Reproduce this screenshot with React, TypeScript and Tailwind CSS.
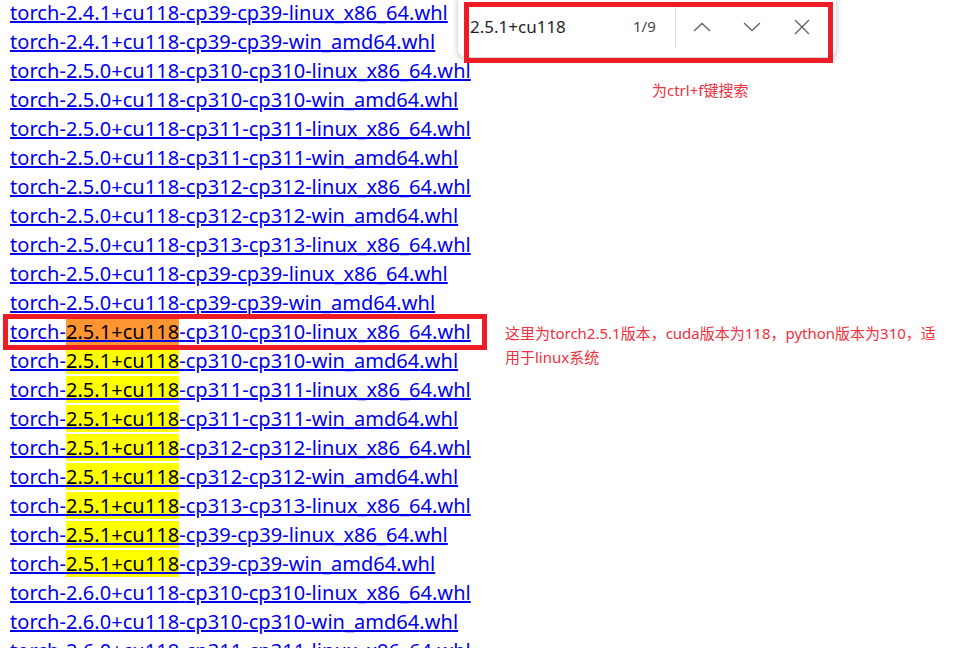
import React from "react";

type Row = { ver: string; tag: string };

const rows: Row[] = [
  { ver: "2.4.1", tag: "cp39-cp39-linux_x86_64" },
  { ver: "2.4.1", tag: "cp39-cp39-win_amd64" },
  { ver: "2.5.0", tag: "cp310-cp310-linux_x86_64" },
  { ver: "2.5.0", tag: "cp310-cp310-win_amd64" },
  { ver: "2.5.0", tag: "cp311-cp311-linux_x86_64" },
  { ver: "2.5.0", tag: "cp311-cp311-win_amd64" },
  { ver: "2.5.0", tag: "cp312-cp312-linux_x86_64" },
  { ver: "2.5.0", tag: "cp312-cp312-win_amd64" },
  { ver: "2.5.0", tag: "cp313-cp313-linux_x86_64" },
  { ver: "2.5.0", tag: "cp39-cp39-linux_x86_64" },
  { ver: "2.5.0", tag: "cp39-cp39-win_amd64" },
  { ver: "2.5.1", tag: "cp310-cp310-linux_x86_64" },
  { ver: "2.5.1", tag: "cp310-cp310-win_amd64" },
  { ver: "2.5.1", tag: "cp311-cp311-linux_x86_64" },
  { ver: "2.5.1", tag: "cp311-cp311-win_amd64" },
  { ver: "2.5.1", tag: "cp312-cp312-linux_x86_64" },
  { ver: "2.5.1", tag: "cp312-cp312-win_amd64" },
  { ver: "2.5.1", tag: "cp313-cp313-linux_x86_64" },
  { ver: "2.5.1", tag: "cp39-cp39-linux_x86_64" },
  { ver: "2.5.1", tag: "cp39-cp39-win_amd64" },
  { ver: "2.6.0", tag: "cp310-cp310-linux_x86_64" },
  { ver: "2.6.0", tag: "cp310-cp310-win_amd64" },
  { ver: "2.6.0", tag: "cp311-cp311-linux_x86_64" },
];

const font = { fontFamily: '"Noto Sans", "Noto Sans CJK SC", sans-serif' };

function Link({ row, active }: { row: Row; active: boolean }) {
  const match = row.ver === "2.5.1";
  return (
    <div className="h-[29px] leading-[29px] whitespace-nowrap">
      <a href="#" className="text-[#0000ee] underline">
        torch-
        {match ? (
          <span className={active ? "bg-[#ff9632] text-black" : "bg-[#ffff00] text-black"}>
            {row.ver}+cu118
          </span>
        ) : (
          `${row.ver}+cu118`
        )}
        -{row.tag}.whl
      </a>
    </div>
  );
}

export default function App() {
  return (
    <div className="relative w-[960px] h-[648px] overflow-hidden bg-white" style={font}>
      <div className="pl-[10px] -mt-[2px] text-[20px] tracking-[0.05px]">
        {rows.map((r, i) => (
          <Link key={i} row={r} active={i === 11} />
        ))}
      </div>

      {/* red box around current match row */}
      <div className="absolute left-[3px] top-[314px] w-[484px] h-[36px] border-[5px] border-[#ee1c25]" />

      <div className="absolute left-[505px] top-[321px] w-[432px] text-[15px] leading-[24px] text-[#f0303c]">
        这里为torch2.5.1版本，cuda版本为118，python版本为310，适用于linux系统
      </div>

      {/* find bar */}
      <div className="absolute left-[458px] top-[-8px] w-[378px] h-[65px] rounded-[8px] bg-white shadow-[0_2px_6px_rgba(0,0,0,0.25)] flex items-center pt-[4px]">
        <div className="shrink-0 pl-[12px] w-[175px] text-[17px] text-[#1f1f1f]">2.5.1+cu118</div>
        <div className="shrink-0 w-[22px] text-[15px] text-[#444]">1/9</div>
        <div className="shrink-0 ml-[20px] w-px h-[42px] bg-[#dcdcdc]" />
        <div className="shrink-0 flex items-center">
          <div className="w-[52px] flex justify-center">
            <svg width="18" height="10" viewBox="0 0 18 10" fill="none" stroke="#5f5f5f" strokeWidth="1.3">
              <path d="M1 9 L9 1.5 L17 9" />
            </svg>
          </div>
          <div className="w-[48px] flex justify-center">
            <svg width="18" height="10" viewBox="0 0 18 10" fill="none" stroke="#5f5f5f" strokeWidth="1.3">
              <path d="M1 1 L9 8.5 L17 1" />
            </svg>
          </div>
          <div className="w-[52px] flex justify-center">
            <svg width="16" height="16" viewBox="0 0 16 16" fill="none" stroke="#5f5f5f" strokeWidth="1.3">
              <path d="M1 1 L15 15 M15 1 L1 15" />
            </svg>
          </div>
        </div>
      </div>
      <div className="absolute left-[464px] top-[2px] w-[369px] h-[61px] border-[5px] border-[#ee1c25]" />

      <div className="absolute left-[652px] top-[79px] text-[15px] text-[#f0303c]">为ctrl+f键搜索</div>
    </div>
  );
}
